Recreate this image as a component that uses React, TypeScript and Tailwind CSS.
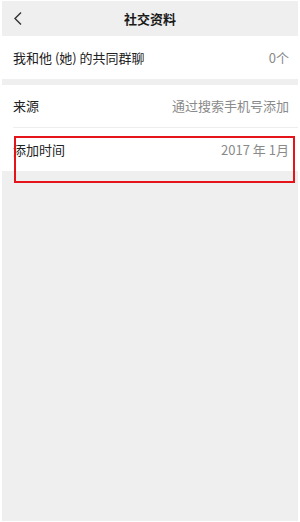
import React from "react";

const rows = [
  { label: "来源", value: "通过搜索手机号添加" },
  { label: "添加时间", value: "2017 年 1月" },
];

export default function App() {
  return (
    <div
      className="relative h-[522px] w-[300px] overflow-hidden bg-white px-[2px] py-[1px]"
      style={{ fontFamily: '"Noto Sans CJK SC", "Noto Sans", sans-serif' }}
    >
      <div className="flex h-full flex-col bg-[#efefef]">
        <div className="relative flex h-[35px] items-center justify-center">
          <svg
            className="absolute left-[11px] top-[10px]"
            width="10"
            height="15"
            viewBox="0 0 10 15"
            fill="none"
          >
            <path d="M8 1.5 L2 7.5 L8 13.5" stroke="#333" strokeWidth="1.4" />
          </svg>
          <span className="text-[13px] font-bold text-[#1a1a1a]">社交资料</span>
        </div>

        <div className="flex h-[43px] items-center justify-between bg-white pl-[11px] pr-[9px] text-[13px]">
          <span className="text-[#222]">我和他 (她) 的共同群聊</span>
          <span className="text-[#8a8a8a]">0个</span>
        </div>

        <div className="mt-[6px] bg-white pl-[11px]">
          {rows.map((r, i) => (
            <div
              key={r.label}
              className={[
                "flex h-[43px] items-center justify-between pr-[9px] text-[13px]",
                i === 0 ? "border-b border-[#eeeeee]" : "",
              ].join(" ")}
            >
              <span className="text-[#222]">{r.label}</span>
              <span className="text-[#8a8a8a]">{r.value}</span>
            </div>
          ))}
        </div>
      </div>

      <div className="absolute left-[14px] top-[136px] h-[47px] w-[281px] border-2 border-[#e5141b]" />
    </div>
  );
}
